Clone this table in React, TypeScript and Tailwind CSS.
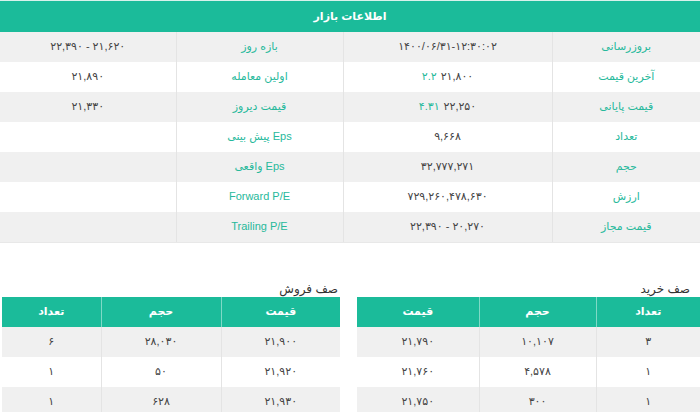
export default function App() {
  const info = [
    { a: 'بروزرسانی', b: '۱۴۰۰/۰۶/۳۱-۱۲:۳۰:۰۲', c: 'بازه روز', d: '۲۲,۳۹۰ - ۲۱,۶۲۰' },
    { a: 'آخرین قیمت', b: '۲۱,۸۰۰', pct: '۲.۲', c: 'اولین معامله', d: '۲۱,۸۹۰' },
    { a: 'قیمت پایانی', b: '۲۲,۲۵۰', pct: '۴.۳۱', c: 'قیمت دیروز', d: '۲۱,۳۳۰' },
    { a: 'تعداد', b: '۹,۶۶۸', c: 'Eps پیش بینی', d: '' },
    { a: 'حجم', b: '۳۲,۷۷۷,۲۷۱', c: 'Eps واقعی', d: '' },
    { a: 'ارزش', b: '۷۲۹,۲۶۰,۴۷۸,۶۳۰', c: 'Forward P/E', d: '' },
    { a: 'قیمت مجاز', b: '۲۲,۳۹۰ - ۲۰,۲۷۰', c: 'Trailing P/E', d: '' },
  ];

  const buy = [
    ['۳', '۱۰,۱۰۷', '۲۱,۷۹۰'],
    ['۱', '۴,۵۷۸', '۲۱,۷۶۰'],
    ['۱', '۳۰۰', '۲۱,۷۵۰'],
  ];
  const sell = [
    ['۲۱,۹۰۰', '۲۸,۰۳۰', '۶'],
    ['۲۱,۹۲۰', '۵۰', '۱'],
    ['۲۱,۹۳۰', '۶۲۸', '۱'],
  ];

  const font = { fontFamily: '"Liberation Sans", "DejaVu Sans", sans-serif' };

  return (
    <div dir="rtl" style={font} className="w-[700px] h-[412px] overflow-hidden bg-white text-[11px] text-[#444]">
      <table className="w-full table-fixed border-collapse">
        <colgroup>
          <col className="w-[148px]" />
          <col className="w-[209px]" />
          <col className="w-[167px]" />
          <col className="w-[176px]" />
        </colgroup>
        <thead>
          <tr>
            <th colSpan={4} className="h-[31px] bg-[#1bbb9a] border-t border-[#d8f2ec] text-white font-bold text-[11px] text-center">
              اطلاعات بازار
            </th>
          </tr>
        </thead>
        <tbody>
          {info.map((r, i) => (
            <tr key={i} className={`h-[30px] ${i % 2 === 0 ? 'bg-[#f0f0f0]' : 'bg-white'}`}>
              <td className="text-center text-[#27b99b] border-l border-[#e4e4e4]">{r.a}</td>
              <td className="border-l border-[#e4e4e4]">
                <div className="flex justify-center gap-1">
                  <span dir="ltr">{r.b}</span>
                  {r.pct && <span className="text-[#27b99b]">{r.pct}</span>}
                </div>
              </td>
              <td className="text-center text-[#27b99b] border-l border-[#e4e4e4]">{r.c}</td>
              <td className="text-center">
                <span dir="ltr">{r.d}</span>
              </td>
            </tr>
          ))}
          <tr className="h-px">
            <td colSpan={4} className="p-0 h-px bg-[#e8e8e8]"></td>
          </tr>
        </tbody>
      </table>

      <div className="flex gap-[17px] mt-[40px]">
        <div className="w-[343px] shrink-0">
          <div className="text-[12px] text-[#333] leading-[12px] pr-[10px] mb-[2px]">صف خرید</div>
          <table className="w-full table-fixed border-collapse">
            <colgroup>
              <col className="w-[104px]" />
              <col className="w-[117px]" />
              <col className="w-[122px]" />
            </colgroup>
            <thead>
              <tr className="h-[30px] bg-[#1bbb9a] text-white">
                <th className="font-bold border-l border-[#7fd9c6]">تعداد</th>
                <th className="font-bold border-l border-[#7fd9c6]">حجم</th>
                <th className="font-bold">قیمت</th>
              </tr>
            </thead>
            <tbody>
              {buy.map((r, i) => (
                <tr key={i} className={`h-[30px] ${i % 2 === 0 ? 'bg-[#f0f0f0]' : 'bg-white'}`}>
                  <td className="text-center border-l border-[#e4e4e4]">{r[0]}</td>
                  <td className="text-center border-l border-[#e4e4e4]">{r[1]}</td>
                  <td className="text-center">{r[2]}</td>
                </tr>
              ))}
            </tbody>
          </table>
        </div>

        <div className="w-[340px] shrink-0">
          <div className="text-[12px] text-[#333] leading-[12px] pr-[2px] mb-[2px]">صف فروش</div>
          <table className="w-[338px] table-fixed border-collapse">
            <colgroup>
              <col className="w-[119px]" />
              <col className="w-[120px]" />
              <col className="w-[99px]" />
            </colgroup>
            <thead>
              <tr className="h-[30px] bg-[#1bbb9a] text-white">
                <th className="font-bold border-l border-[#7fd9c6]">قیمت</th>
                <th className="font-bold border-l border-[#7fd9c6]">حجم</th>
                <th className="font-bold">تعداد</th>
              </tr>
            </thead>
            <tbody>
              {sell.map((r, i) => (
                <tr key={i} className={`h-[30px] ${i % 2 === 0 ? 'bg-[#f0f0f0]' : 'bg-white'}`}>
                  <td className="text-center border-l border-[#e4e4e4]">{r[0]}</td>
                  <td className="text-center border-l border-[#e4e4e4]">{r[1]}</td>
                  <td className="text-center">{r[2]}</td>
                </tr>
              ))}
            </tbody>
          </table>
        </div>
      </div>
    </div>
  );
}
